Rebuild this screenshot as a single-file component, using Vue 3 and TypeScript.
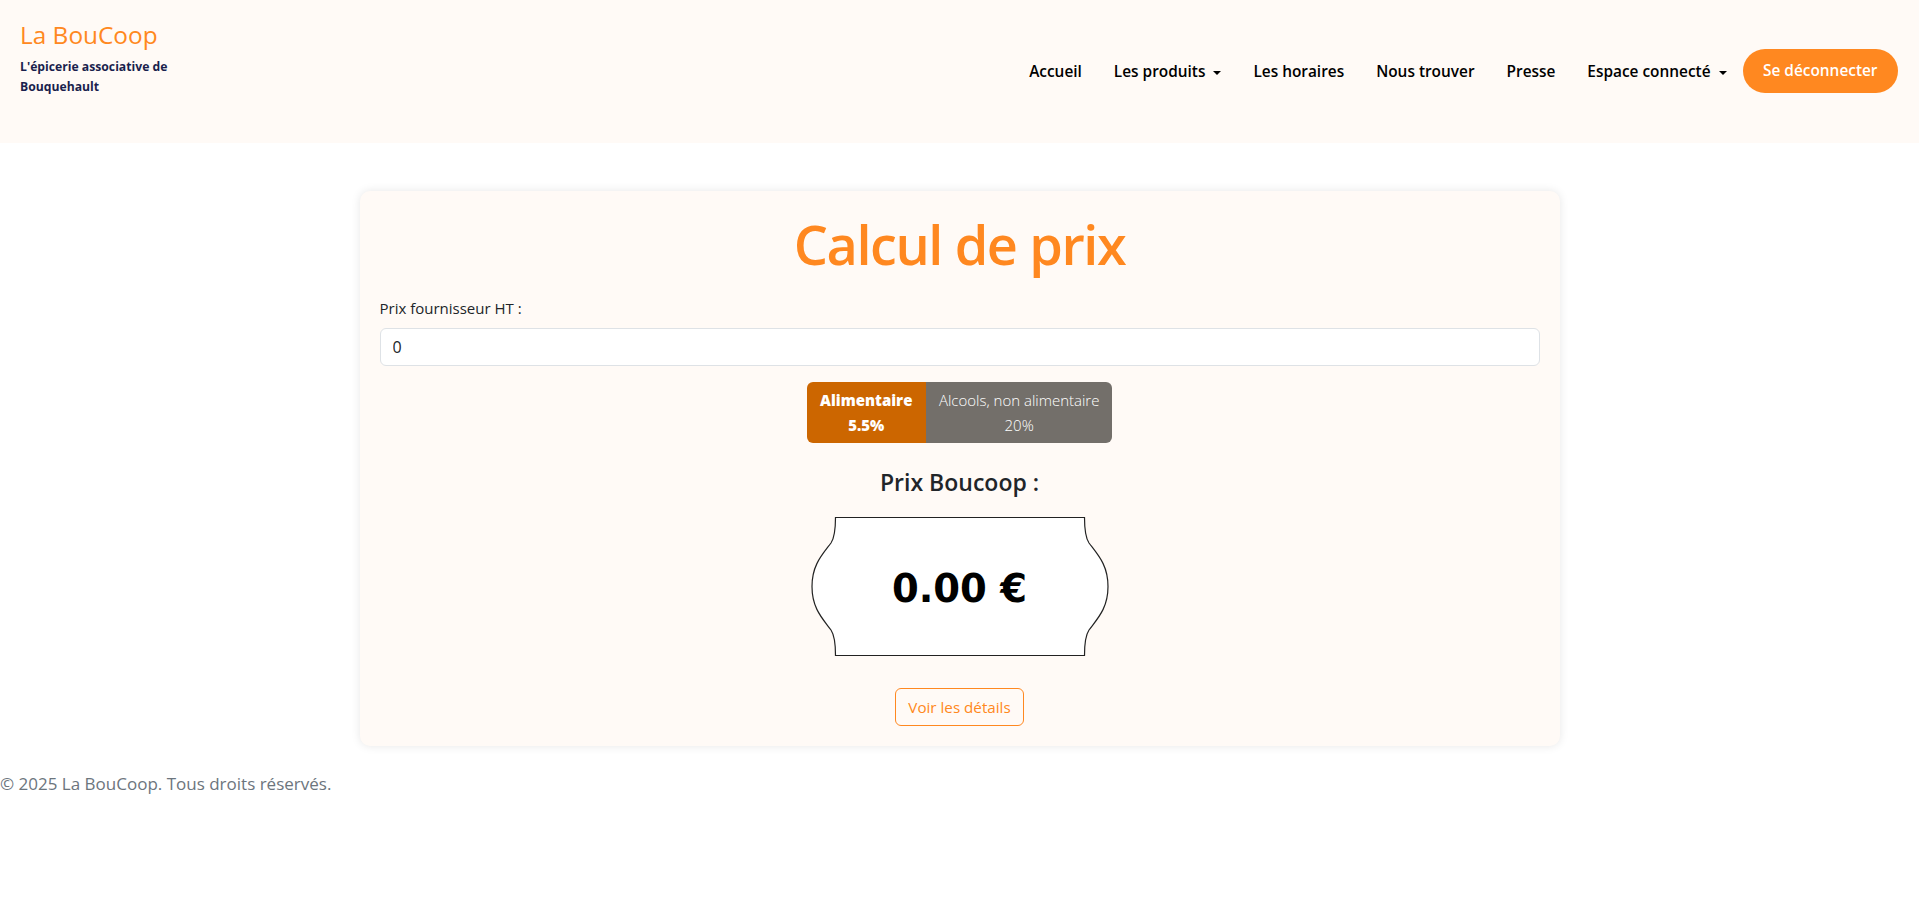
<script setup lang="ts">
import { ref } from 'vue'

const links = [
  { label: 'Accueil' },
  { label: 'Les produits', caret: true },
  { label: 'Les horaires' },
  { label: 'Nous trouver' },
  { label: 'Presse' },
  { label: 'Espace connecté', caret: true }
]

const supplierPrice = ref('0')
const taxRate = ref('food')
</script>

<template>
  <header class="navbar">
    <div class="brand">
      <a class="brand-name">La BouCoop</a>
      <p class="brand-sub">L'épicerie associative de<br />Bouquehault</p>
    </div>
    <nav class="nav">
      <a v-for="link in links" :key="link.label" class="nav-link">
        {{ link.label }}
        <span v-if="link.caret" class="caret"></span>
      </a>
      <a class="logout">Se déconnecter</a>
    </nav>
  </header>

  <main class="card">
    <h1>Calcul de prix</h1>
    <label for="price">Prix fournisseur HT :</label>
    <input id="price" v-model="supplierPrice" type="text" />

    <div class="rates">
      <button :class="{ active: taxRate === 'food' }" @click="taxRate = 'food'">Alimentaire<br />5.5%</button>
      <button :class="{ active: taxRate === 'other' }" @click="taxRate = 'other'">Alcools, non alimentaire<br />20%</button>
    </div>

    <h4>Prix Boucoop :</h4>
    <div class="tag">
      <svg viewBox="0 0 298 139" width="298" height="139" aria-hidden="true">
        <path
          d="M24.5 .5H273.5C273.5 12 274 20 278 26C287 38 297 48 297 69.5C297 91 287 101 278 113C274 119 273.5 127 273.5 138.5H24.5C24.5 127 24 119 20 113C11 101 1 91 1 69.5C1 48 11 38 20 26C24 20 24.5 12 24.5 .5Z"
          fill="#fff"
          stroke="#222"
          stroke-width="1.2"
        />
      </svg>
      <span class="tag-price">0.00 €</span>
    </div>

    <button class="details">Voir les détails</button>
  </main>

  <footer>© 2025 La BouCoop. Tous droits réservés.</footer>
</template>

<style>
body {
  background: #fff;
}
</style>

<style scoped>
.navbar {
  height: 143px;
  box-sizing: border-box;
  padding: 0 20px;
  background: #fffaf6;
  display: flex;
  align-items: center;
  justify-content: space-between;
  font-family: "Open Sans", "Noto Sans", sans-serif;
}

.brand {
  margin-top: -29px;
}

.brand-name {
  display: block;
  color: #ff8820;
  font-size: 24.4px;
  line-height: 36px;
}

.brand-sub {
  margin: 4px 0 0;
  color: #1a1f4d;
  font-size: 12.2px;
  font-weight: 700;
  line-height: 20px;
}

.nav {
  display: flex;
  align-items: center;
  margin: -2px 1px 0 0;
}

.nav-link {
  padding: 2px 16px 0;
  color: #000;
  font-size: 15.4px;
  font-weight: 600;
  white-space: nowrap;
}

.caret {
  display: inline-block;
  margin-left: 4px;
  vertical-align: 2px;
  border-top: 4.3px solid #000;
  border-left: 4.3px solid transparent;
  border-right: 4.3px solid transparent;
}

.logout {
  height: 44px;
  padding: 0 20.5px;
  border-radius: 22px;
  background: #ff8820;
  color: #fff;
  font-size: 15.4px;
  font-weight: 600;
  line-height: 44px;
  white-space: nowrap;
}

.card {
  width: 1200px;
  height: 555px;
  box-sizing: border-box;
  margin: 48px auto 0;
  padding: 20px;
  border-radius: 10px;
  background: #fffaf6;
  box-shadow: 0 0 10px rgba(0, 0, 0, 0.1);
  display: flex;
  flex-direction: column;
  align-items: center;
  font-family: "Open Sans", "Noto Sans", sans-serif;
  color: #212529;
}

h1 {
  margin: 0;
  color: #ff8820;
  font-size: 54px;
  font-weight: 600;
  line-height: 67px;
  letter-spacing: -1.4px;
}

label {
  align-self: flex-start;
  margin-top: 18px;
  font-size: 15px;
  line-height: 24px;
}

input {
  width: 100%;
  height: 38px;
  box-sizing: border-box;
  margin-top: 8px;
  padding: 6px 12px;
  border: 1px solid #dee2e6;
  border-radius: 6px;
  background: #fff;
  color: #212529;
  font: 16px "Open Sans", "Noto Sans", sans-serif;
}

.rates {
  display: flex;
  margin-top: 16px;
  border-radius: 6px;
  overflow: hidden;
}

.rates button {
  height: 62px;
  padding: 0 13px;
  border: 0;
  background: #736f6a;
  color: #fff;
  font: 300 15px/25px "Open Sans", "Noto Sans", sans-serif;
}

.rates button.active {
  padding: 0 13.5px;
  background: #cc6600;
  font-weight: 800;
}

h4 {
  margin: 25px 0 0;
  font-size: 23px;
  font-weight: 600;
  line-height: 29px;
}

.tag {
  position: relative;
  width: 298px;
  height: 139px;
  margin-top: 20px;
}

.tag svg {
  display: block;
}

.tag-price {
  position: absolute;
  inset: 3px 0 0;
  display: flex;
  align-items: center;
  justify-content: center;
  color: #000;
  font: 700 38.5px "DejaVu Sans", sans-serif;
}

.details {
  height: 38px;
  margin-top: 32px;
  padding: 0 12px;
  border: 1px solid #ff8820;
  border-radius: 6px;
  background: transparent;
  color: #ff8820;
  font: 15.2px "Open Sans", "Noto Sans", sans-serif;
}

footer {
  margin-top: 26px;
  color: #6c757d;
  font: 17px/24px "Open Sans", "Noto Sans", sans-serif;
}
</style>
